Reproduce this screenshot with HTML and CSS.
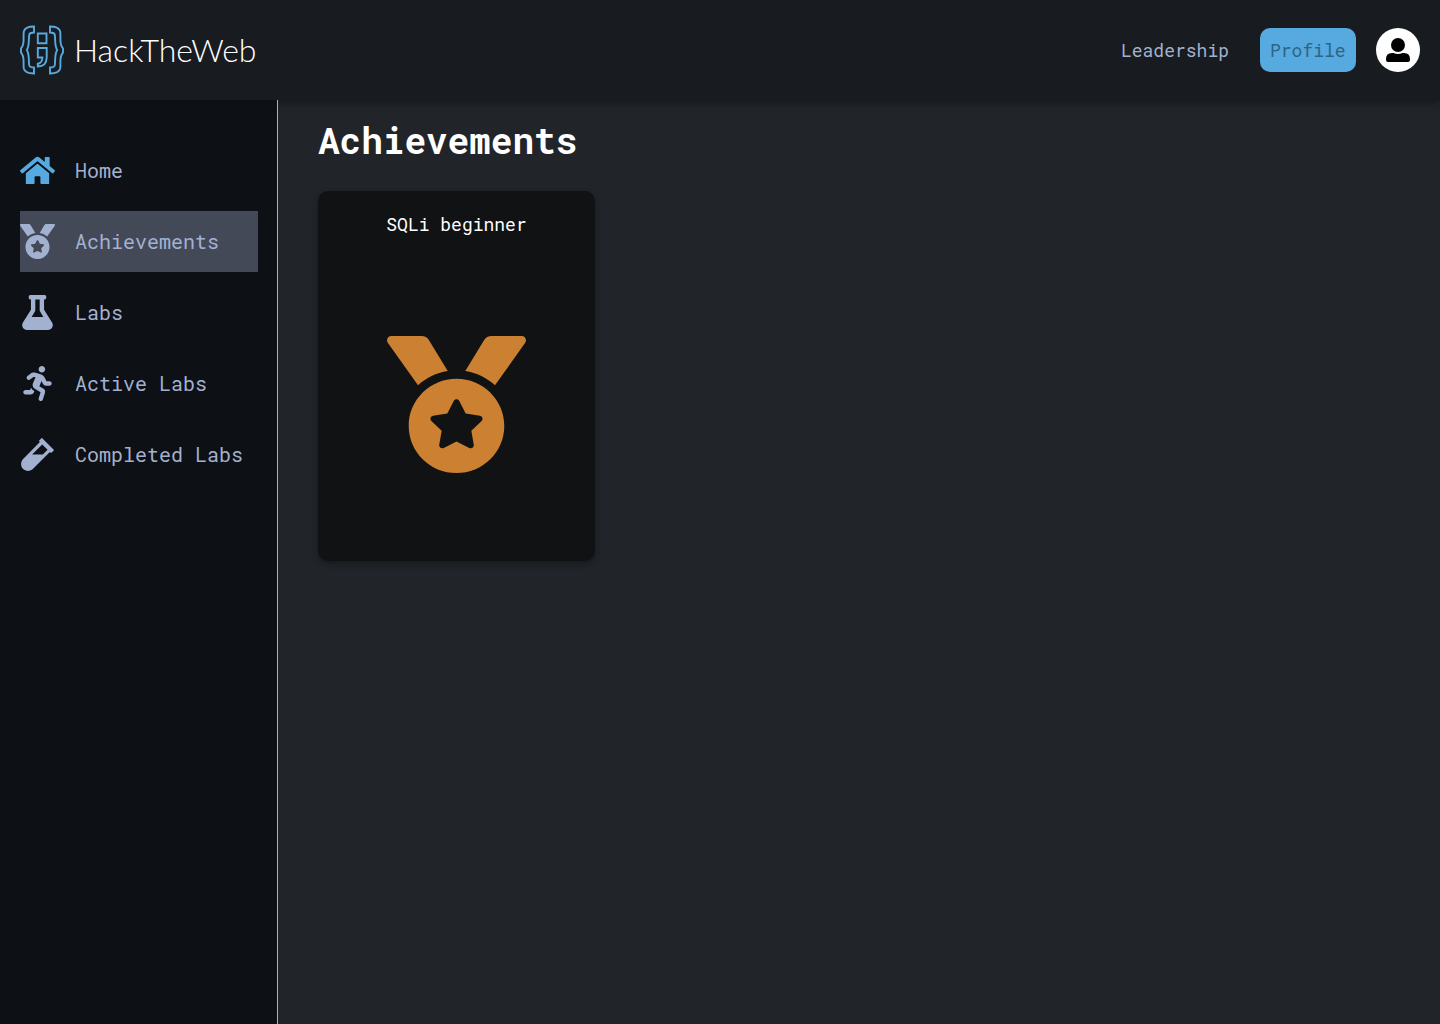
FILE: index.html
```html
<!DOCTYPE html>
<html lang="en">
<head>
<meta charset="utf-8">
<meta name="viewport" content="width=device-width, initial-scale=1">
<title>HackTheWeb</title>
<link rel="stylesheet" href="styles.css">
</head>
<body>
<svg class="sprite" aria-hidden="true">
  <symbol id="medal" viewBox="0 0 512 512" preserveAspectRatio="none"><path d="M223.75 130.75L154.62 15.54A31.997 31.997 0 0 0 127.18 0H16.03C3.08 0-4.5 14.57 2.92 25.18l111.27 158.96c29.72-27.77 67.52-46.83 109.56-53.39zM495.97 0H384.82c-11.24 0-21.66 5.9-27.44 15.54l-69.13 115.21c42.04 6.56 79.84 25.62 109.56 53.38L509.08 25.18C516.5 14.57 508.92 0 495.97 0zM256 160c-97.2 0-176 78.8-176 176s78.8 176 176 176 176-78.8 176-176-78.8-176-176-176zm92.52 157.26l-37.93 36.96 8.97 52.22c1.6 9.36-8.26 16.51-16.65 12.09L256 393.88l-46.9 24.65c-8.4 4.45-18.25-2.74-16.65-12.09l8.97-52.22-37.93-36.96c-6.82-6.64-3.05-18.23 6.35-19.59l52.43-7.64 23.43-47.52c2.11-4.28 6.19-6.39 10.28-6.39 4.11 0 8.22 2.14 10.33 6.39l23.43 47.52 52.43 7.64c9.4 1.36 13.17 12.95 6.35 19.59z"/></symbol>
</svg>
<header class="topbar">
  <a class="brand" href="#">
    <svg class="brand-mark" viewBox="0 0 44 50" aria-hidden="true">
      <g fill="none" stroke="currentColor" stroke-width="1.9">
        <path id="brace" d="M14 1.500Q5 1.500 3.800 6.500C3 12 4.500 17 2.500 21L1 23.500V27.500L2.500 30C4.500 34 3 39 3.800 43.500Q5 48.500 14 48.500V42.500Q9.500 42.500 9.200 40C8.500 35 9.500 29 6.800 25C9.500 21 8.500 15 9.200 10Q9.500 7.500 14 7.500Z"/>
        <use href="#brace" transform="matrix(-1 0 0 1 44 0)"/>
        <path d="M17.800 8.500H26.500V18.200H17.800ZM17.800 23H26.700V32.500Q26.500 41.500 17.800 41.500V38.800Q22.200 38 22.400 32.500H17.800Z"/>
      </g>
    </svg>
    <span class="brand-name">HackTheWeb</span>
  </a>
  <nav class="toplinks" aria-label="Account">
    <a class="toplink" href="#">Leadership</a>
    <button class="profile" type="button">Profile</button>
    <a class="avatar" href="#" aria-label="User account">
      <svg width="24" height="24" viewBox="0 0 24 24" aria-hidden="true"><circle cx="12" cy="7" r="7"/><path d="M6 15H7.500Q12 17 16.500 15H18Q24 15 24 21V22Q24 24 22 24H2Q0 24 0 22V21Q0 15 6 15Z"/></svg>
    </a>
  </nav>
</header>
<div class="layout">
  <nav class="sidebar" aria-label="Main">
    <a class="item" href="#"><svg class="icon home" viewBox="0 0 576 512" aria-hidden="true"><path d="M280.37 148.26L96 300.11V464a16 16 0 0 0 16 16l112.06-.29a16 16 0 0 0 15.920-16V368a16 16 0 0 1 16-16h64a16 16 0 0 1 16 16v95.640a16 16 0 0 0 16 16.050L464 480a16 16 0 0 0 16-16V300L295.670 148.260a12.190 12.190 0 0 0-15.300 0zM571.600 251.470L488 182.560V44.050a12 12 0 0 0-12-12h-56a12 12 0 0 0-12 12v72.610L318.470 43a48 48 0 0 0-61 0L4.340 251.470a12 12 0 0 0-1.600 16.900l25.500 31A12 12 0 0 0 45.150 301l235.220-193.740a12.190 12.190 0 0 1 15.300 0L530.900 301a12 12 0 0 0 16.900-1.600l25.500-31a12 12 0 0 0-1.700-16.930z"/></svg>Home</a>
    <a class="item active" href="#" aria-current="page"><svg class="icon" aria-hidden="true"><use href="#medal"/></svg>Achievements</a>
    <a class="item" href="#"><svg class="icon" viewBox="0 0 448 512" aria-hidden="true"><path d="M437.2 403.5L320 215V64h8c13.3 0 24-10.7 24-24V24c0-13.3-10.7-24-24-24H120c-13.3 0-24 10.7-24 24v16c0 13.3 10.7 24 24 24h8v151L10.8 403.5C-18.5 450.6 15.3 512 70.9 512h306.200c55.700 0 89.400-61.500 60.100-108.500zM137.900 320l48.200-77.600c3.700-5.200 5.800-11.600 5.800-18.400V64h64v160c0 6.900 2.200 13.200 5.800 18.400l48.200 77.600h-172z"/></svg>Labs</a>
    <a class="item" href="#"><svg class="icon" viewBox="0 0 416 512" aria-hidden="true"><path d="M272 96c26.51 0 48-21.49 48-48S298.51 0 272 0s-48 21.49-48 48 21.49 48 48 48zM113.69 317.47l-14.8 34.52H32c-17.67 0-32 14.33-32 32s14.33 32 32 32h77.45c19.25 0 36.58-11.44 44.11-29.09l8.79-20.52-10.67-6.3c-17.32-10.23-30.06-25.37-37.99-42.61zM384 223.99h-44.03l-26.06-53.25c-12.5-25.55-35.45-44.23-61.78-50.94l-71.08-21.14c-28.3-6.8-57.77-.55-80.84 17.14l-39.67 30.41c-14.03 10.75-16.69 30.83-5.92 44.86s30.84 16.66 44.86 5.92l39.69-30.41c7.67-5.89 17.44-8 25.27-6.14l14.7 4.37-37.46 87.39c-12.62 29.48-1.31 64.01 26.3 80.31l84.98 50.17-27.47 87.73c-5.28 16.86 4.11 34.82 20.97 40.09 3.19 1 6.41 1.48 9.58 1.48 13.61 0 26.23-8.77 30.52-22.45l31.64-101.06c5.91-20.77-2.89-43.08-21.64-54.39l-61.24-36.14 31.31-78.28 20.27 41.43c8 16.34 24.92 26.89 43.11 26.89H384c17.67 0 32-14.33 32-32s-14.33-31.99-32-31.99z"/></svg>Active Labs</a>
    <a class="item" href="#"><svg class="icon" viewBox="0 0 480 512" aria-hidden="true"><path d="M477.7 186.1L309.5 18.3c-3.1-3.1-8.2-3.1-11.3 0l-34 33.9c-3.1 3.1-3.1 8.2 0 11.3l11.2 11.1L33 316.5c-38.8 38.7-45.1 102-9.4 143.5 20.6 24 49.5 36 78.4 35.9 26.4 0 52.8-10 72.9-30.1l246.3-245.7 11.2 11.1c3.1 3.1 8.2 3.1 11.3 0l34-33.9c3.1-3 3.1-8.1 0-11.2zM318 256H161l148-147.7 78.5 78.3L318 256z"/></svg>Completed Labs</a>
  </nav>
  <main class="content">
    <h1 class="title">Achievements</h1>
    <div class="cards">
      <article class="card">
        <h2 class="card-title">SQLi beginner</h2>
        <div class="card-body"><svg class="badge" aria-hidden="true"><use href="#medal"/></svg></div>
      </article>
    </div>
  </main>
</div>
</body>
</html>
```
FILE: styles.css
```css
* { box-sizing: border-box; }

body {
  margin: 0;
  min-height: 100vh;
  display: flex;
  flex-direction: column;
  background: #212429;
  color: #a3b1d1;
  font-family: "Roboto Mono", "DejaVu Sans Mono", "Liberation Mono", monospace;
}

a { color: inherit; text-decoration: none; }
svg { display: block; fill: currentColor; }
.sprite { display: none; }

.topbar {
  display: flex;
  align-items: center;
  justify-content: space-between;
  min-height: 100px;
  padding: 0 20px;
  background: #181b1f;
  box-shadow: 0 2px 8px #14171a;
}

.brand { display: flex; align-items: center; gap: 10px; }
.brand-mark { width: 44px; height: 50px; color: #56aadf; }
.brand-name {
  color: #fff;
  font-family: Lato, sans-serif;
  font-size: 32px;
  font-weight: 300;
  line-height: 38px;
}

.toplinks { display: flex; align-items: center; gap: 20px; font-size: 18px; }
.toplink { padding: 10px 11px 10px 10px; }
.profile {
  width: 96px;
  height: 44px;
  padding: 0 10px;
  border: 0;
  border-radius: 10px;
  background: #56aadf;
  color: #2b6587;
  font: inherit;
  text-align: left;
}
.avatar {
  display: grid;
  place-items: center;
  width: 44px;
  height: 44px;
  border-radius: 50%;
  background: #fff;
  color: #000;
}

.layout { display: flex; flex: 1; }

.sidebar {
  position: relative;
  display: flex;
  flex-direction: column;
  flex: 0 0 278px;
  gap: 10px;
  padding: 40px 19px 40px 20px;
  border-right: 1px solid #a3b1d1;
  background: #0d1014;
}
.item {
  display: flex;
  align-items: center;
  gap: 20px;
  min-height: 61px;
  font-size: 20px;
  line-height: 25px;
  white-space: nowrap;
}
.active { background: #434956; }
.icon { width: 35px; height: 35px; }
.home { color: #56aadf; }

.content { flex: 1; padding: 16px 40px; }
.title {
  margin: 0 0 27px;
  color: #fff;
  font-size: 36px;
  line-height: 48px;
}
.cards { display: flex; flex-wrap: wrap; gap: 20px; }
.card {
  display: flex;
  flex-direction: column;
  width: 277px;
  min-height: 370px;
  padding: 20px;
  border-radius: 10px;
  background: #111213;
  box-shadow: 0 3px 5px #181b1e;
}
.card-title {
  margin: 0;
  color: #fff;
  font-size: 18px;
  font-weight: 400;
  line-height: 26px;
  text-align: center;
}
.card-body { display: grid; flex: 1; place-items: center; padding-top: 30px; }
.badge { width: 139px; height: 137px; color: #cb8032; }
```
